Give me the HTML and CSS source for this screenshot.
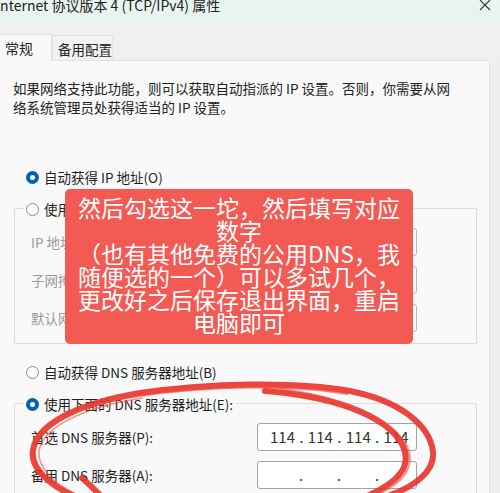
FILE: index.html
```html
<!DOCTYPE html>
<html lang="zh-CN">
<head>
    <meta charset="UTF-8">
    <meta name="viewport" content="width=device-width, initial-scale=1.0">
    <title>Internet 协议版本 4 (TCP/IPv4) 属性</title>
    <link rel="stylesheet" href="styles.css">
</head>
<body>

    <div class="window">
        <div class="titlebar">
            <span class="title">Internet 协议版本 4 (TCP/IPv4) 属性</span>
            <svg class="close" width="12" height="12" viewBox="0 0 12 12">
                <path d="M1 1 L11 11 M11 1 L1 11" stroke="#333" stroke-width="1.1" fill="none"/>
            </svg>
        </div>

        <div class="tabs">
            <div class="tab active">常规</div>
            <div class="tab">备用配置</div>
        </div>

        <div class="panel">
            <p class="intro">如果网络支持此功能，则可以获取自动指派的 IP 设置。否则，你需要从网<br>络系统管理员处获得适当的 IP 设置。</p>

            <div class="option first"><span class="radio on"></span>自动获得 IP 地址(O)</div>

            <div class="group ip_group">
                <div class="legend"><span class="radio"></span>使用下面的 IP 地址(S):</div>
                <div class="field disabled"><span>IP 地址(I):</span><span class="box"></span></div>
                <div class="field disabled"><span>子网掩码(U):</span><span class="box"></span></div>
                <div class="field disabled"><span>默认网关(D):</span><span class="box"></span></div>
            </div>

            <div class="option dns_auto"><span class="radio"></span>自动获得 DNS 服务器地址(B)</div>

            <div class="group dns_group">
                <div class="legend"><span class="radio on"></span>使用下面的 DNS 服务器地址(E):</div>
                <div class="field"><span>首选 DNS 服务器(P):</span><span class="box filled">114 . 114 . 114 . 114</span></div>
                <div class="field"><span>备用 DNS 服务器(A):</span><span class="box dots"><i>.</i><i>.</i><i>.</i></span></div>
            </div>
        </div>

        <div class="note">然后勾选这一坨，然后填写对应<br>数字<br>（也有其他免费的公用DNS，我<br>随便选的一个）可以多试几个，<br>更改好之后保存退出界面，重启<br>电脑即可</div>

        <!-- hand drawn circle round the DNS fields -->
        <svg class="scribble" width="500" height="493" viewBox="0 0 500 493">
            <g fill="none" stroke-linecap="round">
                <path d="M77 497 C50 486 30 468 33 450 C37 425 75 404 140 393 C210 383 295 381 350 391 C400 401 430 425 433 452 C435 471 415 487 385 497" stroke="#e8322a" stroke-width="6" opacity="0.9"/>
                <path d="M72 497 C47 486 28 468 31 451 C35 427 72 406 138 396 C208 386 292 384 347 394" stroke="#f04a3c" stroke-width="2" opacity="0.7"/>
                <path d="M82 497 C56 486 37 468 39 451 C43 428 80 408 142 398" stroke="#f04a3c" stroke-width="1.5" opacity="0.6"/>
                <path d="M265 391 C330 396 385 414 402 444 C413 465 400 482 365 497" stroke="#e8322a" stroke-width="6" opacity="0.9"/>
                <path d="M280 389 C340 396 392 418 407 446 C416 466 404 484 372 497" stroke="#f04a3c" stroke-width="2" opacity="0.6"/>
                <path d="M82 478 C89 484 95 490 102 497" stroke="#e8322a" stroke-width="6" opacity="0.9"/>
            </g>
        </svg>
    </div>

</body>
</html>
```

FILE: styles.css
```css
* {
    margin: 0px;
    padding: 0px;
    box-sizing: border-box;
}

body {
    width: 500px;
    height: 493px;
    overflow: hidden;
    background-color: #efefef;
    font-family: "Noto Sans CJK SC", "Noto Sans", sans-serif;
    color: #1f1f1f;
}

.window {
    position: relative;
    width: 500px;
    height: 493px;
    overflow: hidden;
}

.titlebar {
    height: 22px;
    display: flex;
    justify-content: space-between;
    align-items: flex-start;
    background-color: #e9f4f1;
}

.title {
    margin-left: -4px;
    margin-top: -2px;
    font-size: 14px;
    line-height: 14px;
    color: #222;
}

.close {
    margin-top: -1px;
    margin-right: 9px;
}

.tabs {
    height: 38px;
    display: flex;
    align-items: flex-end;
    background-color: #f0f0f0;
}

.tab {
    height: 25px;
    width: 61px;
    padding-left: 5px;
    padding-top: 2px;
    font-size: 13.5px;
    line-height: 23px;
    background-color: #f2f2f2;
    border: 1px solid #e2e2e2;
    border-bottom: none;
}

.tab.active {
    width: 52px;
    height: 27px;
    padding-top: 0px;
    line-height: 27px;
    font-size: 14px;
    background-color: #f9f9f9;
    border-left: none;
    border-right: 1px solid #e2e2e2;
    margin-bottom: -1px;
    position: relative;
}

.panel {
    width: 490px;
    height: 433px;
    padding: 0 13px;
    background-color: #f9f9f9;
    border-top: 1px solid #e2e2e2;
    border-right: 1px solid #e2e2e2;
    font-size: 13.5px;
}

.intro {
    margin-top: 18px;
    line-height: 19px;
    white-space: nowrap;
    color: #222;
}

.option, .legend {
    height: 20px;
    display: flex;
    align-items: center;
    gap: 5px;
    white-space: nowrap;
}

.option {
    padding-left: 13px;
}

.first {
    margin-top: 50px;
}

.radio {
    width: 13px;
    height: 13px;
    border-radius: 50%;
    border: 1px solid #8a8a8a;
    background-color: #fdfdfd;
    flex-shrink: 0;
}

.radio.on {
    border: 4px solid #0062b1;
    background-color: #ffffff;
}

.group {
    width: 463px;
    margin-left: 1px;
    border: 1px solid #dcdcdc;
    border-radius: 2px;
    display: flex;
    flex-direction: column;
    gap: 10px;
}

.legend {
    align-self: flex-start;
    margin-top: -10px;
    margin-left: 9px;
    margin-bottom: -1px;
    padding: 0 3px 0 2px;
    background-color: #f9f9f9;
}

.ip_group {
    margin-top: 21px;
    padding-bottom: 11px;
}

.dns_auto {
    margin-top: 18px;
}

.dns_group {
    margin-top: 21px;
    height: 120px;
}

.field {
    display: grid;
    grid-template-columns: 226px 160px;
    align-items: center;
    padding-left: 16px;
    height: 28px;
    white-space: nowrap;
}

.field.disabled {
    color: #9a9a9a;
}

.box {
    height: 28px;
    background-color: #ffffff;
    border: 1px solid #a3a3a3;
    border-radius: 3px;
    font-size: 15px;
    line-height: 26px;
    color: #333;
}

.disabled .box {
    border-color: #b8b8b8;
    background-color: #fbfbfb;
}

.filled {
    padding-left: 12px;
    word-spacing: 1px;
}

.dots {
    display: flex;
    gap: 34px;
    padding-left: 41px;
}

.dots i {
    font-style: normal;
    width: 4px;
}

.note {
    position: absolute;
    left: 65px;
    top: 189px;
    width: 348px;
    height: 155px;
    padding-top: 7px;
    background-color: #f35a53;
    border-radius: 5px;
    color: #ffffff;
    font-size: 23px;
    line-height: 23px;
    text-align: center;
    white-space: nowrap;
}

.scribble {
    position: absolute;
    left: 0px;
    top: 0px;
    pointer-events: none;
}
```
